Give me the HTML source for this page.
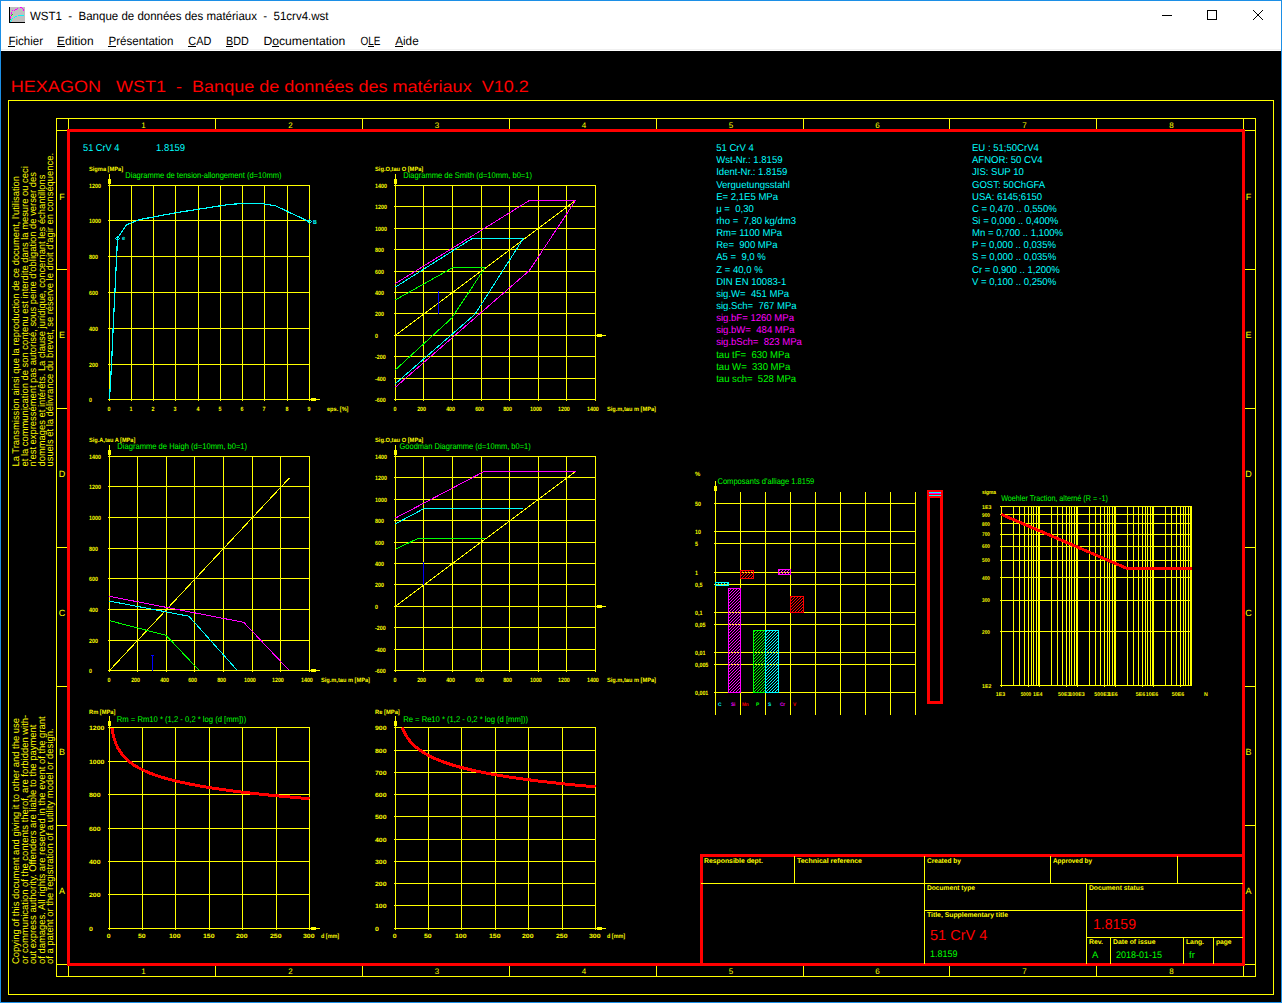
<!DOCTYPE html>
<html><head><meta charset="utf-8"><style>
html,body{margin:0;padding:0;background:#000;}
body{width:1282px;height:1003px;overflow:hidden;}
svg{display:block;text-rendering:geometricPrecision;font-family:"Liberation Sans",sans-serif;}
</style></head><body>
<svg width="1282" height="1003" viewBox="0 0 1282 1003" shape-rendering="crispEdges">
<defs><pattern id="h00ffff" patternUnits="userSpaceOnUse" width="3" height="3"><path d="M0 3L3 0M-1 1L1 -1M2 4L4 2" stroke="#00ffff" stroke-width="1" shape-rendering="crispEdges"/></pattern><pattern id="hff00ff" patternUnits="userSpaceOnUse" width="3" height="3"><path d="M0 3L3 0M-1 1L1 -1M2 4L4 2" stroke="#ff00ff" stroke-width="1" shape-rendering="crispEdges"/></pattern><pattern id="hff0000" patternUnits="userSpaceOnUse" width="3" height="3"><path d="M0 3L3 0M-1 1L1 -1M2 4L4 2" stroke="#ff0000" stroke-width="1" shape-rendering="crispEdges"/></pattern><pattern id="h00ff00" patternUnits="userSpaceOnUse" width="3" height="3"><path d="M0 3L3 0M-1 1L1 -1M2 4L4 2" stroke="#00ff00" stroke-width="1" shape-rendering="crispEdges"/></pattern></defs>
<rect x="0" y="0" width="1282" height="51" fill="#ffffff"/>
<rect x="1" y="49" width="1280" height="1" fill="#f0f0f0"/>
<rect x="1" y="51" width="1280" height="951" fill="#000000"/>
<rect x="0" y="0" width="1282" height="1" fill="#1c8fe6"/>
<rect x="0" y="0" width="1" height="1003" fill="#1c8fe6"/>
<rect x="1281" y="0" width="1" height="1003" fill="#1c8fe6"/>
<rect x="0" y="1002" width="1282" height="1" fill="#1c8fe6"/>
<rect x="10" y="7" width="15" height="15" fill="#c0c0c0"/>
<rect x="9" y="7" width="1" height="16" fill="#000"/><rect x="9" y="22" width="16" height="1" fill="#000"/>
<rect x="12" y="10" width="1" height="1" fill="#ff00ff"/>
<rect x="14" y="10" width="1" height="1" fill="#ff00ff"/>
<rect x="15" y="9" width="1" height="1" fill="#ff00ff"/>
<rect x="16" y="9" width="1" height="1" fill="#ff00ff"/>
<rect x="17" y="8" width="1" height="1" fill="#ff00ff"/>
<rect x="20" y="7" width="1" height="1" fill="#ff00ff"/>
<rect x="21" y="7" width="1" height="1" fill="#ff00ff"/>
<rect x="22" y="8" width="1" height="1" fill="#ff00ff"/>
<rect x="23" y="9" width="1" height="1" fill="#ff00ff"/>
<rect x="23" y="10" width="1" height="1" fill="#ff00ff"/>
<rect x="11" y="12" width="1" height="1" fill="#ff00ff"/>
<rect x="11" y="13" width="1" height="1" fill="#ff00ff"/>
<rect x="11" y="14" width="1" height="1" fill="#ff00ff"/>
<rect x="10" y="16" width="1" height="1" fill="#ff00ff"/>
<rect x="10" y="17" width="1" height="1" fill="#ff00ff"/>
<rect x="10" y="18" width="1" height="1" fill="#ff00ff"/>
<rect x="12" y="14" width="1" height="1" fill="#00ff00"/>
<rect x="11" y="15" width="1" height="1" fill="#00ff00"/>
<rect x="10" y="19" width="1" height="1" fill="#00ff00"/>
<rect x="10" y="21" width="1" height="1" fill="#00ffff"/>
<rect x="11" y="19" width="1" height="1" fill="#00ffff"/>
<rect x="11" y="20" width="1" height="1" fill="#00ffff"/>
<rect x="12" y="18" width="1" height="1" fill="#00ffff"/>
<rect x="14" y="17" width="1" height="1" fill="#00ffff"/>
<rect x="15" y="16" width="1" height="1" fill="#00ffff"/>
<rect x="16" y="16" width="1" height="1" fill="#00ffff"/>
<rect x="18" y="15" width="1" height="1" fill="#00ffff"/>
<rect x="19" y="15" width="1" height="1" fill="#00ffff"/>
<rect x="20" y="15" width="1" height="1" fill="#00ffff"/>
<rect x="21" y="15" width="1" height="1" fill="#00ffff"/>
<rect x="22" y="15" width="1" height="1" fill="#00ffff"/>
<rect x="23" y="15" width="1" height="1" fill="#00ffff"/>
<text x="30" y="20" font-size="12" fill="#000" textLength="298.5" lengthAdjust="spacingAndGlyphs" xml:space="preserve">WST1  -  Banque de données des matériaux  -  51crv4.wst</text>
<path d="M1162 15.5H1172" stroke="#000" stroke-width="1"/>
<rect x="1207.5" y="10.5" width="9" height="9" fill="none" stroke="#000" stroke-width="1"/>
<path d="M1253 10L1263 20M1263 10L1253 20" stroke="#000" stroke-width="1"/>
<text x="8.5" y="45" font-size="12" fill="#000" textLength="34.5" lengthAdjust="spacingAndGlyphs">Fichier</text>
<rect x="8" y="46" width="7" height="1" fill="#000"/>
<text x="57.1" y="45" font-size="12" fill="#000" textLength="36.5" lengthAdjust="spacingAndGlyphs">Edition</text>
<rect x="57" y="46" width="8" height="1" fill="#000"/>
<text x="108.5" y="45" font-size="12" fill="#000" textLength="65" lengthAdjust="spacingAndGlyphs">Présentation</text>
<rect x="108" y="46" width="8" height="1" fill="#000"/>
<text x="188.3" y="45" font-size="12" fill="#000" textLength="23" lengthAdjust="spacingAndGlyphs">CAD</text>
<rect x="188" y="46" width="8" height="1" fill="#000"/>
<text x="226" y="45" font-size="12" fill="#000" textLength="22.7" lengthAdjust="spacingAndGlyphs">BDD</text>
<rect x="226" y="46" width="7" height="1" fill="#000"/>
<text x="263.4" y="45" font-size="12" fill="#000" textLength="82" lengthAdjust="spacingAndGlyphs">Documentation</text>
<rect x="272" y="46" width="7" height="1" fill="#000"/>
<text x="360.5" y="45" font-size="12" fill="#000" textLength="20" lengthAdjust="spacingAndGlyphs">OLE</text>
<rect x="368" y="46" width="6" height="1" fill="#000"/>
<text x="395.2" y="45" font-size="12" fill="#000" textLength="23.5" lengthAdjust="spacingAndGlyphs">Aide</text>
<rect x="395" y="46" width="8" height="1" fill="#000"/>
<text x="10.8" y="92" font-size="16.5" fill="#ff0000" textLength="518" lengthAdjust="spacingAndGlyphs" xml:space="preserve">HEXAGON   WST1  -  Banque de données des matériaux  V10.2</text>
<rect x="8.5" y="100.5" width="1265" height="894" fill="none" stroke="#ff0" stroke-width="1"/>
<rect x="56.5" y="118.5" width="1199" height="858" fill="none" stroke="#ff0" stroke-width="1"/>
<path d="M56 130.5H69" stroke="#ffff00" stroke-width="1"/>
<path d="M68.5 118V131" stroke="#ffff00" stroke-width="1"/>
<path d="M1243 130.5H1256" stroke="#ffff00" stroke-width="1"/>
<path d="M1243.5 118V131" stroke="#ffff00" stroke-width="1"/>
<path d="M56 964.5H69" stroke="#ffff00" stroke-width="1"/>
<path d="M68.5 964V977" stroke="#ffff00" stroke-width="1"/>
<path d="M1243 964.5H1256" stroke="#ffff00" stroke-width="1"/>
<path d="M1243.5 964V977" stroke="#ffff00" stroke-width="1"/>
<path d="M215.5 118V132" stroke="#ffff00" stroke-width="1"/>
<path d="M215.5 963V977" stroke="#ffff00" stroke-width="1"/>
<path d="M362.5 118V132" stroke="#ffff00" stroke-width="1"/>
<path d="M362.5 963V977" stroke="#ffff00" stroke-width="1"/>
<path d="M509.5 118V132" stroke="#ffff00" stroke-width="1"/>
<path d="M509.5 963V977" stroke="#ffff00" stroke-width="1"/>
<path d="M656.5 118V132" stroke="#ffff00" stroke-width="1"/>
<path d="M656.5 963V977" stroke="#ffff00" stroke-width="1"/>
<path d="M803.5 118V132" stroke="#ffff00" stroke-width="1"/>
<path d="M803.5 963V977" stroke="#ffff00" stroke-width="1"/>
<path d="M949.5 118V132" stroke="#ffff00" stroke-width="1"/>
<path d="M949.5 963V977" stroke="#ffff00" stroke-width="1"/>
<path d="M1096.5 118V132" stroke="#ffff00" stroke-width="1"/>
<path d="M1096.5 963V977" stroke="#ffff00" stroke-width="1"/>
<text x="143.5" y="128" font-size="8" fill="#ffff00" text-anchor="middle">1</text>
<text x="143.5" y="974" font-size="8" fill="#ffff00" text-anchor="middle">1</text>
<text x="290.5" y="128" font-size="8" fill="#ffff00" text-anchor="middle">2</text>
<text x="290.5" y="974" font-size="8" fill="#ffff00" text-anchor="middle">2</text>
<text x="437.0" y="128" font-size="8" fill="#ffff00" text-anchor="middle">3</text>
<text x="437.0" y="974" font-size="8" fill="#ffff00" text-anchor="middle">3</text>
<text x="584.0" y="128" font-size="8" fill="#ffff00" text-anchor="middle">4</text>
<text x="584.0" y="974" font-size="8" fill="#ffff00" text-anchor="middle">4</text>
<text x="731.0" y="128" font-size="8" fill="#ffff00" text-anchor="middle">5</text>
<text x="731.0" y="974" font-size="8" fill="#ffff00" text-anchor="middle">5</text>
<text x="877.5" y="128" font-size="8" fill="#ffff00" text-anchor="middle">6</text>
<text x="877.5" y="974" font-size="8" fill="#ffff00" text-anchor="middle">6</text>
<text x="1024.5" y="128" font-size="8" fill="#ffff00" text-anchor="middle">7</text>
<text x="1024.5" y="974" font-size="8" fill="#ffff00" text-anchor="middle">7</text>
<text x="1171.5" y="128" font-size="8" fill="#ffff00" text-anchor="middle">8</text>
<text x="1171.5" y="974" font-size="8" fill="#ffff00" text-anchor="middle">8</text>
<path d="M56 269.5H69" stroke="#ffff00" stroke-width="1"/>
<path d="M1243 269.5H1256" stroke="#ffff00" stroke-width="1"/>
<path d="M56 408.5H69" stroke="#ffff00" stroke-width="1"/>
<path d="M1243 408.5H1256" stroke="#ffff00" stroke-width="1"/>
<path d="M56 547.5H69" stroke="#ffff00" stroke-width="1"/>
<path d="M1243 547.5H1256" stroke="#ffff00" stroke-width="1"/>
<path d="M56 686.5H69" stroke="#ffff00" stroke-width="1"/>
<path d="M1243 686.5H1256" stroke="#ffff00" stroke-width="1"/>
<path d="M56 825.5H69" stroke="#ffff00" stroke-width="1"/>
<path d="M1243 825.5H1256" stroke="#ffff00" stroke-width="1"/>
<text x="62" y="199.5" font-size="9" fill="#ffff00" text-anchor="middle">F</text>
<text x="1248.5" y="199.5" font-size="9" fill="#ffff00" text-anchor="middle">F</text>
<text x="62" y="338.41999999999996" font-size="9" fill="#ffff00" text-anchor="middle">E</text>
<text x="1248.5" y="338.41999999999996" font-size="9" fill="#ffff00" text-anchor="middle">E</text>
<text x="62" y="477.34" font-size="9" fill="#ffff00" text-anchor="middle">D</text>
<text x="1248.5" y="477.34" font-size="9" fill="#ffff00" text-anchor="middle">D</text>
<text x="62" y="616.26" font-size="9" fill="#ffff00" text-anchor="middle">C</text>
<text x="1248.5" y="616.26" font-size="9" fill="#ffff00" text-anchor="middle">C</text>
<text x="62" y="755.18" font-size="9" fill="#ffff00" text-anchor="middle">B</text>
<text x="1248.5" y="755.18" font-size="9" fill="#ffff00" text-anchor="middle">B</text>
<text x="62" y="894.0999999999999" font-size="9" fill="#ffff00" text-anchor="middle">A</text>
<text x="1248.5" y="894.0999999999999" font-size="9" fill="#ffff00" text-anchor="middle">A</text>
<rect x="68.5" y="130.5" width="1175" height="834" fill="none" stroke="#ff0000" stroke-width="3"/>
<g transform="translate(0,466.5) rotate(-90)">
<text x="0" y="19.4" font-size="9.8" fill="#ffff00" textLength="290.56" lengthAdjust="spacingAndGlyphs">La Transmission ainsi que la reproduction de ce document, l'utilisation</text>
<text x="0" y="27.799999999999997" font-size="9.8" fill="#ffff00" textLength="300.24" lengthAdjust="spacingAndGlyphs">et la communication de son contenu est interdite dans la mesure ou ceci</text>
<text x="0" y="36.2" font-size="9.8" fill="#ffff00" textLength="294.44" lengthAdjust="spacingAndGlyphs">n'est expressément pas autorisé, sous peine d'obligation de verser des</text>
<text x="0" y="44.6" font-size="9.8" fill="#ffff00" textLength="291.9" lengthAdjust="spacingAndGlyphs">dommages et intérêts. La clause juridique, concernant les échantillons</text>
<text x="0" y="53.0" font-size="9.8" fill="#ffff00" textLength="313.5" lengthAdjust="spacingAndGlyphs">usuels et la délivrance du brevet, se réserve le droit d'agir en conséquence.</text>
</g>
<g transform="translate(0,964) rotate(-90)">
<text x="0" y="19.4" font-size="9.8" fill="#ffff00" textLength="246.08" lengthAdjust="spacingAndGlyphs">Copying of this document and giving it to other and the use</text>
<text x="0" y="27.799999999999997" font-size="9.8" fill="#ffff00" textLength="249.2" lengthAdjust="spacingAndGlyphs">or communication of the contents therof, are forbidden with-</text>
<text x="0" y="36.2" font-size="9.8" fill="#ffff00" textLength="239.42" lengthAdjust="spacingAndGlyphs">out express authority. Offenders are liable to the payment</text>
<text x="0" y="44.6" font-size="9.8" fill="#ffff00" textLength="247.64" lengthAdjust="spacingAndGlyphs">of damages. All rights are reserved in the event of the grant</text>
<text x="0" y="53.0" font-size="9.8" fill="#ffff00" textLength="235.57" lengthAdjust="spacingAndGlyphs">of a patent or the registration of a utility model or design.</text>
</g>
<path d="M109.5 185V401" stroke="#ffff00" stroke-width="1"/>
<path d="M131.5 185V401" stroke="#ffff00" stroke-width="1"/>
<path d="M153.5 185V401" stroke="#ffff00" stroke-width="1"/>
<path d="M175.5 185V401" stroke="#ffff00" stroke-width="1"/>
<path d="M198.5 185V401" stroke="#ffff00" stroke-width="1"/>
<path d="M220.5 185V401" stroke="#ffff00" stroke-width="1"/>
<path d="M242.5 185V401" stroke="#ffff00" stroke-width="1"/>
<path d="M264.5 185V401" stroke="#ffff00" stroke-width="1"/>
<path d="M287.5 185V401" stroke="#ffff00" stroke-width="1"/>
<path d="M309.5 185V401" stroke="#ffff00" stroke-width="1"/>
<path d="M108 185.5H310" stroke="#ffff00" stroke-width="1"/>
<path d="M108 220.5H310" stroke="#ffff00" stroke-width="1"/>
<path d="M108 256.5H310" stroke="#ffff00" stroke-width="1"/>
<path d="M108 292.5H310" stroke="#ffff00" stroke-width="1"/>
<path d="M108 328.5H310" stroke="#ffff00" stroke-width="1"/>
<path d="M108 364.5H310" stroke="#ffff00" stroke-width="1"/>
<path d="M108 399.5H310" stroke="#ffff00" stroke-width="1"/>
<path d="M109.5 174V186" stroke="#ffff00" stroke-width="1"/>
<rect x="108" y="179" width="3" height="5" fill="#ffff00"/>
<path d="M309 399.5H320" stroke="#ffff00" stroke-width="1"/>
<rect x="311" y="398" width="5" height="3" fill="#ffff00"/>
<text x="89" y="187.5" font-size="6.2" fill="#ffff00" textLength="11.86" lengthAdjust="spacingAndGlyphs" font-weight="bold">1200</text>
<text x="89" y="222.5" font-size="6.2" fill="#ffff00" textLength="11.86" lengthAdjust="spacingAndGlyphs" font-weight="bold">1000</text>
<text x="89" y="258.5" font-size="6.2" fill="#ffff00" textLength="8.9" lengthAdjust="spacingAndGlyphs" font-weight="bold">800</text>
<text x="89" y="294.5" font-size="6.2" fill="#ffff00" textLength="8.9" lengthAdjust="spacingAndGlyphs" font-weight="bold">600</text>
<text x="89" y="330.5" font-size="6.2" fill="#ffff00" textLength="8.9" lengthAdjust="spacingAndGlyphs" font-weight="bold">400</text>
<text x="89" y="366.5" font-size="6.2" fill="#ffff00" textLength="8.9" lengthAdjust="spacingAndGlyphs" font-weight="bold">200</text>
<text x="89" y="401.5" font-size="6.2" fill="#ffff00" textLength="2.97" lengthAdjust="spacingAndGlyphs" font-weight="bold">0</text>
<text x="109.0" y="410.5" font-size="6.2" fill="#ffff00" text-anchor="middle" textLength="2.97" lengthAdjust="spacingAndGlyphs" font-weight="bold">0</text>
<text x="131.0" y="410.5" font-size="6.2" fill="#ffff00" text-anchor="middle" textLength="2.97" lengthAdjust="spacingAndGlyphs" font-weight="bold">1</text>
<text x="153.0" y="410.5" font-size="6.2" fill="#ffff00" text-anchor="middle" textLength="2.97" lengthAdjust="spacingAndGlyphs" font-weight="bold">2</text>
<text x="175.0" y="410.5" font-size="6.2" fill="#ffff00" text-anchor="middle" textLength="2.97" lengthAdjust="spacingAndGlyphs" font-weight="bold">3</text>
<text x="198.0" y="410.5" font-size="6.2" fill="#ffff00" text-anchor="middle" textLength="2.97" lengthAdjust="spacingAndGlyphs" font-weight="bold">4</text>
<text x="220.0" y="410.5" font-size="6.2" fill="#ffff00" text-anchor="middle" textLength="2.97" lengthAdjust="spacingAndGlyphs" font-weight="bold">5</text>
<text x="242.0" y="410.5" font-size="6.2" fill="#ffff00" text-anchor="middle" textLength="2.97" lengthAdjust="spacingAndGlyphs" font-weight="bold">6</text>
<text x="264.0" y="410.5" font-size="6.2" fill="#ffff00" text-anchor="middle" textLength="2.97" lengthAdjust="spacingAndGlyphs" font-weight="bold">7</text>
<text x="287.0" y="410.5" font-size="6.2" fill="#ffff00" text-anchor="middle" textLength="2.97" lengthAdjust="spacingAndGlyphs" font-weight="bold">8</text>
<text x="309.0" y="410.5" font-size="6.2" fill="#ffff00" text-anchor="middle" textLength="2.97" lengthAdjust="spacingAndGlyphs" font-weight="bold">9</text>
<text x="89" y="171" font-size="6.2" fill="#ffff00" textLength="34.07" lengthAdjust="spacingAndGlyphs" font-weight="bold">Sigma [MPa]</text>
<text x="327" y="410.5" font-size="6.2" fill="#ffff00" textLength="21.5" lengthAdjust="spacingAndGlyphs" font-weight="bold">eps. [%]</text>
<text x="125.3" y="178.3" font-size="8.4" fill="#00ff00" textLength="156.2" lengthAdjust="spacingAndGlyphs">Diagramme de tension-allongement (d=10mm)</text>
<text x="83" y="151" font-size="10" fill="#00ffff" textLength="36.5" lengthAdjust="spacingAndGlyphs">51 CrV 4</text>
<text x="156" y="151" font-size="10" fill="#00ffff" textLength="29.05" lengthAdjust="spacingAndGlyphs">1.8159</text>
<path d="M109.50 399.50 L111.50 365.00 L113.20 326.00 L115.30 284.00 L117.50 238.50 L121.00 233.00 L126.30 225.10 L131.00 223.00 L139.50 219.60 L174.50 213.00 L227.20 204.70 L244.70 203.20 L262.20 203.60 L275.40 205.80 L309.50 221.80" fill="none" stroke="#00ffff" stroke-width="1.2" stroke-linejoin="round"/>
<circle cx="117.5" cy="238.5" r="1.6" fill="none" stroke="#00ffff" stroke-width="1"/>
<circle cx="309.5" cy="221.5" r="1.6" fill="none" stroke="#00ffff" stroke-width="1"/>
<text x="122" y="240" font-size="6" fill="#00ffff" textLength="3.2" lengthAdjust="spacingAndGlyphs" font-weight="bold">e</text>
<text x="313" y="223.5" font-size="6" fill="#00ffff" textLength="3.84" lengthAdjust="spacingAndGlyphs" font-weight="bold">B</text>
<path d="M395.5 185V401" stroke="#ffff00" stroke-width="1"/>
<path d="M423.5 185V401" stroke="#ffff00" stroke-width="1"/>
<path d="M452.5 185V401" stroke="#ffff00" stroke-width="1"/>
<path d="M481.5 185V401" stroke="#ffff00" stroke-width="1"/>
<path d="M509.5 185V401" stroke="#ffff00" stroke-width="1"/>
<path d="M538.5 185V401" stroke="#ffff00" stroke-width="1"/>
<path d="M566.5 185V401" stroke="#ffff00" stroke-width="1"/>
<path d="M595.5 185V401" stroke="#ffff00" stroke-width="1"/>
<path d="M394 185.5H596" stroke="#ffff00" stroke-width="1"/>
<path d="M394 206.5H596" stroke="#ffff00" stroke-width="1"/>
<path d="M394 228.5H596" stroke="#ffff00" stroke-width="1"/>
<path d="M394 249.5H596" stroke="#ffff00" stroke-width="1"/>
<path d="M394 271.5H596" stroke="#ffff00" stroke-width="1"/>
<path d="M394 292.5H596" stroke="#ffff00" stroke-width="1"/>
<path d="M394 313.5H596" stroke="#ffff00" stroke-width="1"/>
<path d="M394 335.5H596" stroke="#ffff00" stroke-width="1"/>
<path d="M394 356.5H596" stroke="#ffff00" stroke-width="1"/>
<path d="M394 378.5H596" stroke="#ffff00" stroke-width="1"/>
<path d="M394 399.5H596" stroke="#ffff00" stroke-width="1"/>
<path d="M395.5 174V186" stroke="#ffff00" stroke-width="1"/>
<rect x="394" y="179" width="3" height="5" fill="#ffff00"/>
<text x="375" y="187.5" font-size="6.2" fill="#ffff00" textLength="11.86" lengthAdjust="spacingAndGlyphs" font-weight="bold">1400</text>
<text x="375" y="208.5" font-size="6.2" fill="#ffff00" textLength="11.86" lengthAdjust="spacingAndGlyphs" font-weight="bold">1200</text>
<text x="375" y="230.5" font-size="6.2" fill="#ffff00" textLength="11.86" lengthAdjust="spacingAndGlyphs" font-weight="bold">1000</text>
<text x="375" y="251.5" font-size="6.2" fill="#ffff00" textLength="8.9" lengthAdjust="spacingAndGlyphs" font-weight="bold">800</text>
<text x="375" y="273.5" font-size="6.2" fill="#ffff00" textLength="8.9" lengthAdjust="spacingAndGlyphs" font-weight="bold">600</text>
<text x="375" y="294.5" font-size="6.2" fill="#ffff00" textLength="8.9" lengthAdjust="spacingAndGlyphs" font-weight="bold">400</text>
<text x="375" y="315.5" font-size="6.2" fill="#ffff00" textLength="8.9" lengthAdjust="spacingAndGlyphs" font-weight="bold">200</text>
<text x="375" y="337.5" font-size="6.2" fill="#ffff00" textLength="2.97" lengthAdjust="spacingAndGlyphs" font-weight="bold">0</text>
<text x="375" y="358.5" font-size="6.2" fill="#ffff00" textLength="10.67" lengthAdjust="spacingAndGlyphs" font-weight="bold">-200</text>
<text x="375" y="380.5" font-size="6.2" fill="#ffff00" textLength="10.67" lengthAdjust="spacingAndGlyphs" font-weight="bold">-400</text>
<text x="375" y="401.5" font-size="6.2" fill="#ffff00" textLength="10.67" lengthAdjust="spacingAndGlyphs" font-weight="bold">-600</text>
<text x="395.0" y="410.5" font-size="6.2" fill="#ffff00" text-anchor="middle" textLength="2.97" lengthAdjust="spacingAndGlyphs" font-weight="bold">0</text>
<text x="421.6" y="410.5" font-size="6.2" fill="#ffff00" text-anchor="middle" textLength="8.9" lengthAdjust="spacingAndGlyphs" font-weight="bold">200</text>
<text x="450.6" y="410.5" font-size="6.2" fill="#ffff00" text-anchor="middle" textLength="8.9" lengthAdjust="spacingAndGlyphs" font-weight="bold">400</text>
<text x="479.6" y="410.5" font-size="6.2" fill="#ffff00" text-anchor="middle" textLength="8.9" lengthAdjust="spacingAndGlyphs" font-weight="bold">600</text>
<text x="507.6" y="410.5" font-size="6.2" fill="#ffff00" text-anchor="middle" textLength="8.9" lengthAdjust="spacingAndGlyphs" font-weight="bold">800</text>
<text x="535.9" y="410.5" font-size="6.2" fill="#ffff00" text-anchor="middle" textLength="11.86" lengthAdjust="spacingAndGlyphs" font-weight="bold">1000</text>
<text x="563.9" y="410.5" font-size="6.2" fill="#ffff00" text-anchor="middle" textLength="11.86" lengthAdjust="spacingAndGlyphs" font-weight="bold">1200</text>
<text x="592.9" y="410.5" font-size="6.2" fill="#ffff00" text-anchor="middle" textLength="11.86" lengthAdjust="spacingAndGlyphs" font-weight="bold">1400</text>
<text x="375" y="171" font-size="6.2" fill="#ffff00" textLength="48.29" lengthAdjust="spacingAndGlyphs" font-weight="bold">Sig.O,tau O [MPa]</text>
<text x="607" y="410.5" font-size="6.2" fill="#ffff00" textLength="48.95" lengthAdjust="spacingAndGlyphs" font-weight="bold">Sig.m,tau m [MPa]</text>
<text x="403.2" y="178.3" font-size="8.4" fill="#00ff00" textLength="128.8" lengthAdjust="spacingAndGlyphs">Diagramme de Smith (d=10mm, b0=1)</text>
<path d="M395.50 335.30 L575.50 200.48" fill="none" stroke="#ffff00" stroke-width="1" stroke-linejoin="round"/>
<path d="M395.50 283.51 L529.36 200.48 L575.50 200.48 L529.36 270.56 L395.50 387.09" fill="none" stroke="#ff00ff" stroke-width="1" stroke-linejoin="round"/>
<path d="M395.50 287.04 L472.93 238.04 L523.64 238.04 L474.93 314.33 L395.50 383.56" fill="none" stroke="#00ffff" stroke-width="1" stroke-linejoin="round"/>
<path d="M395.50 299.88 L452.50 267.78 L484.93 267.78 L451.93 317.86 L395.50 369.75" fill="none" stroke="#00ff00" stroke-width="1" stroke-linejoin="round"/>
<path d="M438.5 291V314" stroke="#0000ff" stroke-width="1.3"/>
<path d="M595 335.5H606" stroke="#ffff00" stroke-width="1"/>
<rect x="597" y="334" width="5" height="3" fill="#ffff00"/>
<path d="M109.5 456V672" stroke="#ffff00" stroke-width="1"/>
<path d="M137.5 456V672" stroke="#ffff00" stroke-width="1"/>
<path d="M166.5 456V672" stroke="#ffff00" stroke-width="1"/>
<path d="M194.5 456V672" stroke="#ffff00" stroke-width="1"/>
<path d="M223.5 456V672" stroke="#ffff00" stroke-width="1"/>
<path d="M252.5 456V672" stroke="#ffff00" stroke-width="1"/>
<path d="M280.5 456V672" stroke="#ffff00" stroke-width="1"/>
<path d="M309.5 456V672" stroke="#ffff00" stroke-width="1"/>
<path d="M108 456.5H310" stroke="#ffff00" stroke-width="1"/>
<path d="M108 486.5H310" stroke="#ffff00" stroke-width="1"/>
<path d="M108 517.5H310" stroke="#ffff00" stroke-width="1"/>
<path d="M108 548.5H310" stroke="#ffff00" stroke-width="1"/>
<path d="M108 578.5H310" stroke="#ffff00" stroke-width="1"/>
<path d="M108 609.5H310" stroke="#ffff00" stroke-width="1"/>
<path d="M108 640.5H310" stroke="#ffff00" stroke-width="1"/>
<path d="M108 670.5H310" stroke="#ffff00" stroke-width="1"/>
<path d="M109.5 445V457" stroke="#ffff00" stroke-width="1"/>
<rect x="108" y="450" width="3" height="5" fill="#ffff00"/>
<path d="M309 670.5H320" stroke="#ffff00" stroke-width="1"/>
<rect x="311" y="669" width="5" height="3" fill="#ffff00"/>
<text x="89" y="458.5" font-size="6.2" fill="#ffff00" textLength="11.86" lengthAdjust="spacingAndGlyphs" font-weight="bold">1400</text>
<text x="89" y="488.5" font-size="6.2" fill="#ffff00" textLength="11.86" lengthAdjust="spacingAndGlyphs" font-weight="bold">1200</text>
<text x="89" y="519.5" font-size="6.2" fill="#ffff00" textLength="11.86" lengthAdjust="spacingAndGlyphs" font-weight="bold">1000</text>
<text x="89" y="550.5" font-size="6.2" fill="#ffff00" textLength="8.9" lengthAdjust="spacingAndGlyphs" font-weight="bold">800</text>
<text x="89" y="580.5" font-size="6.2" fill="#ffff00" textLength="8.9" lengthAdjust="spacingAndGlyphs" font-weight="bold">600</text>
<text x="89" y="611.5" font-size="6.2" fill="#ffff00" textLength="8.9" lengthAdjust="spacingAndGlyphs" font-weight="bold">400</text>
<text x="89" y="642.5" font-size="6.2" fill="#ffff00" textLength="8.9" lengthAdjust="spacingAndGlyphs" font-weight="bold">200</text>
<text x="89" y="672.5" font-size="6.2" fill="#ffff00" textLength="2.97" lengthAdjust="spacingAndGlyphs" font-weight="bold">0</text>
<text x="109.0" y="682" font-size="6.2" fill="#ffff00" text-anchor="middle" textLength="2.97" lengthAdjust="spacingAndGlyphs" font-weight="bold">0</text>
<text x="135.6" y="682" font-size="6.2" fill="#ffff00" text-anchor="middle" textLength="8.9" lengthAdjust="spacingAndGlyphs" font-weight="bold">200</text>
<text x="164.6" y="682" font-size="6.2" fill="#ffff00" text-anchor="middle" textLength="8.9" lengthAdjust="spacingAndGlyphs" font-weight="bold">400</text>
<text x="192.6" y="682" font-size="6.2" fill="#ffff00" text-anchor="middle" textLength="8.9" lengthAdjust="spacingAndGlyphs" font-weight="bold">600</text>
<text x="221.6" y="682" font-size="6.2" fill="#ffff00" text-anchor="middle" textLength="8.9" lengthAdjust="spacingAndGlyphs" font-weight="bold">800</text>
<text x="249.9" y="682" font-size="6.2" fill="#ffff00" text-anchor="middle" textLength="11.86" lengthAdjust="spacingAndGlyphs" font-weight="bold">1000</text>
<text x="277.9" y="682" font-size="6.2" fill="#ffff00" text-anchor="middle" textLength="11.86" lengthAdjust="spacingAndGlyphs" font-weight="bold">1200</text>
<text x="306.9" y="682" font-size="6.2" fill="#ffff00" text-anchor="middle" textLength="11.86" lengthAdjust="spacingAndGlyphs" font-weight="bold">1400</text>
<text x="89" y="441.5" font-size="6.2" fill="#ffff00" textLength="46.32" lengthAdjust="spacingAndGlyphs" font-weight="bold">Sig.A,tau A [MPa]</text>
<text x="321" y="682" font-size="6.2" fill="#ffff00" textLength="48.95" lengthAdjust="spacingAndGlyphs" font-weight="bold">Sig.m,tau m [MPa]</text>
<text x="117.3" y="449.3" font-size="8.4" fill="#00ff00" textLength="129.8" lengthAdjust="spacingAndGlyphs">Diagramme de Haigh (d=10mm, b0=1)</text>
<path d="M109.50 670.50 L289.21 478.21" fill="none" stroke="#ffff00" stroke-width="1" stroke-linejoin="round"/>
<path d="M109.50 596.36 L243.79 622.35 L289.21 670.50" fill="none" stroke="#ff00ff" stroke-width="1" stroke-linejoin="round"/>
<path d="M109.50 601.10 L188.93 616.24 L237.36 670.50" fill="none" stroke="#00ffff" stroke-width="1" stroke-linejoin="round"/>
<path d="M109.50 620.67 L166.07 635.34 L199.21 670.50" fill="none" stroke="#00ff00" stroke-width="1" stroke-linejoin="round"/>
<path d="M152.5 654.5V671M151 655H154" stroke="#0000ff" stroke-width="1"/>
<path d="M395.5 456V672" stroke="#ffff00" stroke-width="1"/>
<path d="M423.5 456V672" stroke="#ffff00" stroke-width="1"/>
<path d="M452.5 456V672" stroke="#ffff00" stroke-width="1"/>
<path d="M481.5 456V672" stroke="#ffff00" stroke-width="1"/>
<path d="M509.5 456V672" stroke="#ffff00" stroke-width="1"/>
<path d="M538.5 456V672" stroke="#ffff00" stroke-width="1"/>
<path d="M566.5 456V672" stroke="#ffff00" stroke-width="1"/>
<path d="M595.5 456V672" stroke="#ffff00" stroke-width="1"/>
<path d="M394 456.5H596" stroke="#ffff00" stroke-width="1"/>
<path d="M394 477.5H596" stroke="#ffff00" stroke-width="1"/>
<path d="M394 499.5H596" stroke="#ffff00" stroke-width="1"/>
<path d="M394 520.5H596" stroke="#ffff00" stroke-width="1"/>
<path d="M394 542.5H596" stroke="#ffff00" stroke-width="1"/>
<path d="M394 563.5H596" stroke="#ffff00" stroke-width="1"/>
<path d="M394 584.5H596" stroke="#ffff00" stroke-width="1"/>
<path d="M394 606.5H596" stroke="#ffff00" stroke-width="1"/>
<path d="M394 627.5H596" stroke="#ffff00" stroke-width="1"/>
<path d="M394 649.5H596" stroke="#ffff00" stroke-width="1"/>
<path d="M394 670.5H596" stroke="#ffff00" stroke-width="1"/>
<path d="M395.5 445V457" stroke="#ffff00" stroke-width="1"/>
<rect x="394" y="450" width="3" height="5" fill="#ffff00"/>
<path d="M595 606.5H606" stroke="#ffff00" stroke-width="1"/>
<rect x="597" y="605" width="5" height="3" fill="#ffff00"/>
<text x="375" y="458.5" font-size="6.2" fill="#ffff00" textLength="11.86" lengthAdjust="spacingAndGlyphs" font-weight="bold">1400</text>
<text x="375" y="479.5" font-size="6.2" fill="#ffff00" textLength="11.86" lengthAdjust="spacingAndGlyphs" font-weight="bold">1200</text>
<text x="375" y="501.5" font-size="6.2" fill="#ffff00" textLength="11.86" lengthAdjust="spacingAndGlyphs" font-weight="bold">1000</text>
<text x="375" y="522.5" font-size="6.2" fill="#ffff00" textLength="8.9" lengthAdjust="spacingAndGlyphs" font-weight="bold">800</text>
<text x="375" y="544.5" font-size="6.2" fill="#ffff00" textLength="8.9" lengthAdjust="spacingAndGlyphs" font-weight="bold">600</text>
<text x="375" y="565.5" font-size="6.2" fill="#ffff00" textLength="8.9" lengthAdjust="spacingAndGlyphs" font-weight="bold">400</text>
<text x="375" y="586.5" font-size="6.2" fill="#ffff00" textLength="8.9" lengthAdjust="spacingAndGlyphs" font-weight="bold">200</text>
<text x="375" y="608.5" font-size="6.2" fill="#ffff00" textLength="2.97" lengthAdjust="spacingAndGlyphs" font-weight="bold">0</text>
<text x="375" y="629.5" font-size="6.2" fill="#ffff00" textLength="10.67" lengthAdjust="spacingAndGlyphs" font-weight="bold">-200</text>
<text x="375" y="651.5" font-size="6.2" fill="#ffff00" textLength="10.67" lengthAdjust="spacingAndGlyphs" font-weight="bold">-400</text>
<text x="375" y="672.5" font-size="6.2" fill="#ffff00" textLength="10.67" lengthAdjust="spacingAndGlyphs" font-weight="bold">-600</text>
<text x="395.0" y="682" font-size="6.2" fill="#ffff00" text-anchor="middle" textLength="2.97" lengthAdjust="spacingAndGlyphs" font-weight="bold">0</text>
<text x="421.6" y="682" font-size="6.2" fill="#ffff00" text-anchor="middle" textLength="8.9" lengthAdjust="spacingAndGlyphs" font-weight="bold">200</text>
<text x="450.6" y="682" font-size="6.2" fill="#ffff00" text-anchor="middle" textLength="8.9" lengthAdjust="spacingAndGlyphs" font-weight="bold">400</text>
<text x="479.6" y="682" font-size="6.2" fill="#ffff00" text-anchor="middle" textLength="8.9" lengthAdjust="spacingAndGlyphs" font-weight="bold">600</text>
<text x="507.6" y="682" font-size="6.2" fill="#ffff00" text-anchor="middle" textLength="8.9" lengthAdjust="spacingAndGlyphs" font-weight="bold">800</text>
<text x="535.9" y="682" font-size="6.2" fill="#ffff00" text-anchor="middle" textLength="11.86" lengthAdjust="spacingAndGlyphs" font-weight="bold">1000</text>
<text x="563.9" y="682" font-size="6.2" fill="#ffff00" text-anchor="middle" textLength="11.86" lengthAdjust="spacingAndGlyphs" font-weight="bold">1200</text>
<text x="592.9" y="682" font-size="6.2" fill="#ffff00" text-anchor="middle" textLength="11.86" lengthAdjust="spacingAndGlyphs" font-weight="bold">1400</text>
<text x="375" y="441.5" font-size="6.2" fill="#ffff00" textLength="48.29" lengthAdjust="spacingAndGlyphs" font-weight="bold">Sig.O,tau O [MPa]</text>
<text x="607" y="682" font-size="6.2" fill="#ffff00" textLength="48.95" lengthAdjust="spacingAndGlyphs" font-weight="bold">Sig.m,tau m [MPa]</text>
<text x="399.5" y="449.3" font-size="8.4" fill="#00ff00" textLength="131.2" lengthAdjust="spacingAndGlyphs">Goodman Diagramme (d=10mm, b0=1)</text>
<path d="M395.50 606.30 L575.64 471.37" fill="none" stroke="#ffff00" stroke-width="1" stroke-linejoin="round"/>
<path d="M395.50 518.02 L484.93 471.05 L575.64 471.05" fill="none" stroke="#ff00ff" stroke-width="1" stroke-linejoin="round"/>
<path d="M395.50 523.80 L423.50 508.82 L522.93 508.82" fill="none" stroke="#00ffff" stroke-width="1" stroke-linejoin="round"/>
<path d="M395.50 549.27 L418.79 538.03 L484.93 538.03" fill="none" stroke="#00ff00" stroke-width="1" stroke-linejoin="round"/>
<path d="M423.5 562V585" stroke="#0000ff" stroke-width="1.3"/>
<path d="M109.5 727V930" stroke="#ffff00" stroke-width="1"/>
<path d="M142.5 727V930" stroke="#ffff00" stroke-width="1"/>
<path d="M175.5 727V930" stroke="#ffff00" stroke-width="1"/>
<path d="M209.5 727V930" stroke="#ffff00" stroke-width="1"/>
<path d="M242.5 727V930" stroke="#ffff00" stroke-width="1"/>
<path d="M276.5 727V930" stroke="#ffff00" stroke-width="1"/>
<path d="M309.5 727V930" stroke="#ffff00" stroke-width="1"/>
<path d="M108 727.5H310" stroke="#ffff00" stroke-width="1"/>
<path d="M108 761.5H310" stroke="#ffff00" stroke-width="1"/>
<path d="M108 794.5H310" stroke="#ffff00" stroke-width="1"/>
<path d="M108 828.5H310" stroke="#ffff00" stroke-width="1"/>
<path d="M108 861.5H310" stroke="#ffff00" stroke-width="1"/>
<path d="M108 894.5H310" stroke="#ffff00" stroke-width="1"/>
<path d="M108 928.5H310" stroke="#ffff00" stroke-width="1"/>
<path d="M109.5 716V728" stroke="#ffff00" stroke-width="1"/>
<rect x="108" y="721" width="3" height="5" fill="#ffff00"/>
<path d="M309 928.5H320" stroke="#ffff00" stroke-width="1"/>
<rect x="311" y="927" width="5" height="3" fill="#ffff00"/>
<text x="89" y="729.5" font-size="6.2" fill="#ffff00" textLength="15.45" lengthAdjust="spacingAndGlyphs" font-weight="bold">1200</text>
<text x="89" y="763.5" font-size="6.2" fill="#ffff00" textLength="15.45" lengthAdjust="spacingAndGlyphs" font-weight="bold">1000</text>
<text x="89" y="796.5" font-size="6.2" fill="#ffff00" textLength="11.58" lengthAdjust="spacingAndGlyphs" font-weight="bold">800</text>
<text x="89" y="830.5" font-size="6.2" fill="#ffff00" textLength="11.58" lengthAdjust="spacingAndGlyphs" font-weight="bold">600</text>
<text x="89" y="863.5" font-size="6.2" fill="#ffff00" textLength="11.58" lengthAdjust="spacingAndGlyphs" font-weight="bold">400</text>
<text x="89" y="896.5" font-size="6.2" fill="#ffff00" textLength="11.58" lengthAdjust="spacingAndGlyphs" font-weight="bold">200</text>
<text x="89" y="930.5" font-size="6.2" fill="#ffff00" textLength="3.86" lengthAdjust="spacingAndGlyphs" font-weight="bold">0</text>
<text x="108.8" y="937.5" font-size="6.2" fill="#ffff00" text-anchor="middle" textLength="3.86" lengthAdjust="spacingAndGlyphs" font-weight="bold">0</text>
<text x="141.8" y="937.5" font-size="6.2" fill="#ffff00" text-anchor="middle" textLength="7.72" lengthAdjust="spacingAndGlyphs" font-weight="bold">50</text>
<text x="174.8" y="937.5" font-size="6.2" fill="#ffff00" text-anchor="middle" textLength="11.58" lengthAdjust="spacingAndGlyphs" font-weight="bold">100</text>
<text x="208.8" y="937.5" font-size="6.2" fill="#ffff00" text-anchor="middle" textLength="11.58" lengthAdjust="spacingAndGlyphs" font-weight="bold">150</text>
<text x="241.8" y="937.5" font-size="6.2" fill="#ffff00" text-anchor="middle" textLength="11.58" lengthAdjust="spacingAndGlyphs" font-weight="bold">200</text>
<text x="275.8" y="937.5" font-size="6.2" fill="#ffff00" text-anchor="middle" textLength="11.58" lengthAdjust="spacingAndGlyphs" font-weight="bold">250</text>
<text x="308.8" y="937.5" font-size="6.2" fill="#ffff00" text-anchor="middle" textLength="11.58" lengthAdjust="spacingAndGlyphs" font-weight="bold">300</text>
<text x="89" y="714" font-size="6.2" fill="#ffff00" textLength="26.45" lengthAdjust="spacingAndGlyphs" font-weight="bold">Rm [MPa]</text>
<text x="321" y="937.5" font-size="6.2" fill="#ffff00" textLength="18.19" lengthAdjust="spacingAndGlyphs" font-weight="bold">d [mm]</text>
<text x="116.8" y="721.7" font-size="8.4" fill="#00ff00" textLength="129.4" lengthAdjust="spacingAndGlyphs">Rm = Rm10 * (1,2 - 0,2 * log (d [mm]))</text>
<path d="M111.90 727.90 L112.09 729.13 L112.30 730.36 L112.52 731.59 L112.77 732.83 L113.03 734.06 L113.31 735.29 L113.61 736.52 L113.94 737.75 L114.30 738.98 L114.68 740.22 L115.10 741.45 L115.54 742.68 L116.03 743.91 L116.55 745.14 L117.11 746.37 L117.72 747.61 L118.38 748.84 L119.09 750.07 L119.86 751.30 L120.69 752.53 L121.58 753.76 L122.55 755.00 L123.59 756.23 L124.72 757.46 L125.94 758.69 L127.25 759.92 L128.67 761.15 L130.21 762.39 L134.21 765.21 L138.21 767.61 L142.21 769.70 L146.21 771.55 L150.21 773.20 L154.21 774.70 L158.21 776.08 L162.21 777.34 L166.21 778.51 L170.21 779.60 L174.21 780.62 L178.21 781.58 L182.21 782.49 L186.21 783.34 L190.21 784.16 L194.21 784.93 L198.21 785.67 L202.21 786.38 L206.21 787.05 L210.21 787.70 L214.21 788.32 L218.21 788.92 L222.21 789.50 L226.21 790.06 L230.21 790.60 L234.21 791.12 L238.21 791.63 L242.21 792.12 L246.21 792.59 L250.21 793.05 L254.21 793.50 L258.21 793.94 L262.21 794.36 L266.21 794.78 L270.21 795.18 L274.21 795.57 L278.21 795.96 L282.21 796.33 L286.21 796.70 L290.21 797.06 L294.21 797.41 L298.21 797.75 L302.21 798.09 L306.21 798.42 L309.50 798.68" fill="none" stroke="#ff0000" stroke-width="3" stroke-linejoin="round"/>
<path d="M395.5 727V930" stroke="#ffff00" stroke-width="1"/>
<path d="M428.5 727V930" stroke="#ffff00" stroke-width="1"/>
<path d="M461.5 727V930" stroke="#ffff00" stroke-width="1"/>
<path d="M495.5 727V930" stroke="#ffff00" stroke-width="1"/>
<path d="M528.5 727V930" stroke="#ffff00" stroke-width="1"/>
<path d="M562.5 727V930" stroke="#ffff00" stroke-width="1"/>
<path d="M595.5 727V930" stroke="#ffff00" stroke-width="1"/>
<path d="M394 727.5H596" stroke="#ffff00" stroke-width="1"/>
<path d="M394 750.5H596" stroke="#ffff00" stroke-width="1"/>
<path d="M394 772.5H596" stroke="#ffff00" stroke-width="1"/>
<path d="M394 794.5H596" stroke="#ffff00" stroke-width="1"/>
<path d="M394 816.5H596" stroke="#ffff00" stroke-width="1"/>
<path d="M394 839.5H596" stroke="#ffff00" stroke-width="1"/>
<path d="M394 861.5H596" stroke="#ffff00" stroke-width="1"/>
<path d="M394 883.5H596" stroke="#ffff00" stroke-width="1"/>
<path d="M394 905.5H596" stroke="#ffff00" stroke-width="1"/>
<path d="M394 928.5H596" stroke="#ffff00" stroke-width="1"/>
<path d="M395.5 716V728" stroke="#ffff00" stroke-width="1"/>
<rect x="394" y="721" width="3" height="5" fill="#ffff00"/>
<path d="M595 928.5H606" stroke="#ffff00" stroke-width="1"/>
<rect x="597" y="927" width="5" height="3" fill="#ffff00"/>
<text x="375" y="729.5" font-size="6.2" fill="#ffff00" textLength="11.58" lengthAdjust="spacingAndGlyphs" font-weight="bold">900</text>
<text x="375" y="752.5" font-size="6.2" fill="#ffff00" textLength="11.58" lengthAdjust="spacingAndGlyphs" font-weight="bold">800</text>
<text x="375" y="774.5" font-size="6.2" fill="#ffff00" textLength="11.58" lengthAdjust="spacingAndGlyphs" font-weight="bold">700</text>
<text x="375" y="796.5" font-size="6.2" fill="#ffff00" textLength="11.58" lengthAdjust="spacingAndGlyphs" font-weight="bold">600</text>
<text x="375" y="818.5" font-size="6.2" fill="#ffff00" textLength="11.58" lengthAdjust="spacingAndGlyphs" font-weight="bold">500</text>
<text x="375" y="841.5" font-size="6.2" fill="#ffff00" textLength="11.58" lengthAdjust="spacingAndGlyphs" font-weight="bold">400</text>
<text x="375" y="863.5" font-size="6.2" fill="#ffff00" textLength="11.58" lengthAdjust="spacingAndGlyphs" font-weight="bold">300</text>
<text x="375" y="885.5" font-size="6.2" fill="#ffff00" textLength="11.58" lengthAdjust="spacingAndGlyphs" font-weight="bold">200</text>
<text x="375" y="907.5" font-size="6.2" fill="#ffff00" textLength="11.58" lengthAdjust="spacingAndGlyphs" font-weight="bold">100</text>
<text x="375" y="930.5" font-size="6.2" fill="#ffff00" textLength="3.86" lengthAdjust="spacingAndGlyphs" font-weight="bold">0</text>
<text x="394.8" y="937.5" font-size="6.2" fill="#ffff00" text-anchor="middle" textLength="3.86" lengthAdjust="spacingAndGlyphs" font-weight="bold">0</text>
<text x="427.8" y="937.5" font-size="6.2" fill="#ffff00" text-anchor="middle" textLength="7.72" lengthAdjust="spacingAndGlyphs" font-weight="bold">50</text>
<text x="460.8" y="937.5" font-size="6.2" fill="#ffff00" text-anchor="middle" textLength="11.58" lengthAdjust="spacingAndGlyphs" font-weight="bold">100</text>
<text x="494.8" y="937.5" font-size="6.2" fill="#ffff00" text-anchor="middle" textLength="11.58" lengthAdjust="spacingAndGlyphs" font-weight="bold">150</text>
<text x="527.8" y="937.5" font-size="6.2" fill="#ffff00" text-anchor="middle" textLength="11.58" lengthAdjust="spacingAndGlyphs" font-weight="bold">200</text>
<text x="561.8" y="937.5" font-size="6.2" fill="#ffff00" text-anchor="middle" textLength="11.58" lengthAdjust="spacingAndGlyphs" font-weight="bold">250</text>
<text x="594.8" y="937.5" font-size="6.2" fill="#ffff00" text-anchor="middle" textLength="11.58" lengthAdjust="spacingAndGlyphs" font-weight="bold">300</text>
<text x="375" y="714" font-size="6.2" fill="#ffff00" textLength="24.81" lengthAdjust="spacingAndGlyphs" font-weight="bold">Re [MPa]</text>
<text x="607" y="937.5" font-size="6.2" fill="#ffff00" textLength="18.19" lengthAdjust="spacingAndGlyphs" font-weight="bold">d [mm]</text>
<text x="403.2" y="721.7" font-size="8.4" fill="#00ff00" textLength="124.8" lengthAdjust="spacingAndGlyphs">Re = Re10 * (1,2 - 0,2 * log (d [mm]))</text>
<path d="M402.17 727.50 L402.70 728.84 L403.28 730.19 L403.90 731.53 L404.57 732.87 L405.30 734.22 L406.08 735.56 L406.93 736.91 L407.84 738.25 L408.83 739.59 L409.89 740.94 L411.04 742.28 L412.29 743.62 L413.63 744.97 L415.08 746.31 L416.65 747.65 L418.34 749.00 L420.17 750.34 L422.14 751.69 L424.27 753.03 L428.27 755.30 L432.27 757.31 L436.27 759.12 L440.27 760.75 L444.27 762.24 L448.27 763.62 L452.27 764.89 L456.27 766.08 L460.27 767.20 L464.27 768.24 L468.27 769.23 L472.27 770.16 L476.27 771.05 L480.27 771.89 L484.27 772.70 L488.27 773.47 L492.27 774.21 L496.27 774.91 L500.27 775.59 L504.27 776.25 L508.27 776.88 L512.27 777.49 L516.27 778.07 L520.27 778.64 L524.27 779.19 L528.27 779.73 L532.27 780.25 L536.27 780.75 L540.27 781.24 L544.27 781.71 L548.27 782.18 L552.27 782.63 L556.27 783.07 L560.27 783.50 L564.27 783.92 L568.27 784.33 L572.27 784.72 L576.27 785.12 L580.27 785.50 L584.27 785.87 L588.27 786.24 L592.27 786.60 L595.50 786.88" fill="none" stroke="#ff0000" stroke-width="3" stroke-linejoin="round"/>
<text x="716.2" y="151" font-size="10" fill="#00ffff" textLength="37.69" lengthAdjust="spacingAndGlyphs" xml:space="preserve">51 CrV 4</text>
<text x="716.2" y="163" font-size="10" fill="#00ffff" textLength="66.34" lengthAdjust="spacingAndGlyphs" xml:space="preserve">Wst-Nr.: 1.8159</text>
<text x="716.2" y="175" font-size="10" fill="#00ffff" textLength="71.13" lengthAdjust="spacingAndGlyphs" xml:space="preserve">Ident-Nr.: 1.8159</text>
<text x="716.2" y="188" font-size="10" fill="#00ffff" textLength="73.8" lengthAdjust="spacingAndGlyphs" xml:space="preserve">Verguetungsstahl</text>
<text x="716.2" y="200" font-size="10" fill="#00ffff" textLength="61.85" lengthAdjust="spacingAndGlyphs" xml:space="preserve">E= 2,1E5 MPa</text>
<text x="716.2" y="212" font-size="10" fill="#00ffff" textLength="37.63" lengthAdjust="spacingAndGlyphs" xml:space="preserve">μ =  0,30</text>
<text x="716.2" y="224" font-size="10" fill="#00ffff" textLength="79.89" lengthAdjust="spacingAndGlyphs" xml:space="preserve">rho =  7,80 kg/dm3</text>
<text x="716.2" y="236" font-size="10" fill="#00ffff" textLength="65.91" lengthAdjust="spacingAndGlyphs" xml:space="preserve">Rm= 1100 MPa</text>
<text x="716.2" y="248" font-size="10" fill="#00ffff" textLength="61.31" lengthAdjust="spacingAndGlyphs" xml:space="preserve">Re=  900 MPa</text>
<text x="716.2" y="260" font-size="10" fill="#00ffff" textLength="49.64" lengthAdjust="spacingAndGlyphs" xml:space="preserve">A5 =  9,0 %</text>
<text x="716.2" y="273" font-size="10" fill="#00ffff" textLength="46.45" lengthAdjust="spacingAndGlyphs" xml:space="preserve">Z = 40,0 %</text>
<text x="716.2" y="285" font-size="10" fill="#00ffff" textLength="70.06" lengthAdjust="spacingAndGlyphs" xml:space="preserve">DIN EN 10083-1</text>
<text x="716.2" y="297" font-size="10" fill="#00ffff" textLength="72.98" lengthAdjust="spacingAndGlyphs" xml:space="preserve">sig.W=  451 MPa</text>
<text x="716.2" y="309" font-size="10" fill="#00ffff" textLength="80.42" lengthAdjust="spacingAndGlyphs" xml:space="preserve">sig.Sch=  767 MPa</text>
<text x="716.2" y="321" font-size="10" fill="#ff00ff" textLength="77.77" lengthAdjust="spacingAndGlyphs" xml:space="preserve">sig.bF= 1260 MPa</text>
<text x="716.2" y="333" font-size="10" fill="#ff00ff" textLength="78.29" lengthAdjust="spacingAndGlyphs" xml:space="preserve">sig.bW=  484 MPa</text>
<text x="716.2" y="345" font-size="10" fill="#ff00ff" textLength="85.73" lengthAdjust="spacingAndGlyphs" xml:space="preserve">sig.bSch=  823 MPa</text>
<text x="716.2" y="358" font-size="10" fill="#00ff00" textLength="73.52" lengthAdjust="spacingAndGlyphs" xml:space="preserve">tau tF=  630 MPa</text>
<text x="716.2" y="370" font-size="10" fill="#00ff00" textLength="74.05" lengthAdjust="spacingAndGlyphs" xml:space="preserve">tau W=  330 MPa</text>
<text x="716.2" y="382" font-size="10" fill="#00ff00" textLength="79.89" lengthAdjust="spacingAndGlyphs" xml:space="preserve">tau sch=  528 MPa</text>
<text x="972" y="151" font-size="10" fill="#00ffff" textLength="66.88" lengthAdjust="spacingAndGlyphs" xml:space="preserve">EU : 51;50CrV4</text>
<text x="972" y="163" font-size="10" fill="#00ffff" textLength="70.58" lengthAdjust="spacingAndGlyphs" xml:space="preserve">AFNOR: 50 CV4</text>
<text x="972" y="175" font-size="10" fill="#00ffff" textLength="51.84" lengthAdjust="spacingAndGlyphs" xml:space="preserve">JIS: SUP 10</text>
<text x="972" y="188" font-size="10" fill="#00ffff" textLength="73.24" lengthAdjust="spacingAndGlyphs" xml:space="preserve">GOST: 50ChGFA</text>
<text x="972" y="200" font-size="10" fill="#00ffff" textLength="70.08" lengthAdjust="spacingAndGlyphs" xml:space="preserve">USA: 6145;6150</text>
<text x="972" y="212" font-size="10" fill="#00ffff" textLength="84.68" lengthAdjust="spacingAndGlyphs" xml:space="preserve">C = 0,470 .. 0,550%</text>
<text x="972" y="224" font-size="10" fill="#00ffff" textLength="86.27" lengthAdjust="spacingAndGlyphs" xml:space="preserve">Si = 0,000 .. 0,400%</text>
<text x="972" y="236" font-size="10" fill="#00ffff" textLength="91.05" lengthAdjust="spacingAndGlyphs" xml:space="preserve">Mn = 0,700 .. 1,100%</text>
<text x="972" y="248" font-size="10" fill="#00ffff" textLength="83.98" lengthAdjust="spacingAndGlyphs" xml:space="preserve">P = 0,000 .. 0,035%</text>
<text x="972" y="260" font-size="10" fill="#00ffff" textLength="84.15" lengthAdjust="spacingAndGlyphs" xml:space="preserve">S = 0,000 .. 0,035%</text>
<text x="972" y="273" font-size="10" fill="#00ffff" textLength="87.86" lengthAdjust="spacingAndGlyphs" xml:space="preserve">Cr = 0,900 .. 1,200%</text>
<text x="972" y="285" font-size="10" fill="#00ffff" textLength="84.15" lengthAdjust="spacingAndGlyphs" xml:space="preserve">V = 0,100 .. 0,250%</text>
<path d="M715.5 492V715" stroke="#ffff00" stroke-width="1"/>
<path d="M740.5 492V715" stroke="#ffff00" stroke-width="1"/>
<path d="M765.5 492V715" stroke="#ffff00" stroke-width="1"/>
<path d="M790.5 492V715" stroke="#ffff00" stroke-width="1"/>
<path d="M815.5 492V715" stroke="#ffff00" stroke-width="1"/>
<path d="M840.5 492V715" stroke="#ffff00" stroke-width="1"/>
<path d="M865.5 492V715" stroke="#ffff00" stroke-width="1"/>
<path d="M890.5 492V715" stroke="#ffff00" stroke-width="1"/>
<path d="M915.5 492V715" stroke="#ffff00" stroke-width="1"/>
<path d="M714 503.5H916" stroke="#ffff00" stroke-width="1"/>
<text x="695" y="505.5" font-size="6.2" fill="#ffff00" textLength="5.93" lengthAdjust="spacingAndGlyphs" font-weight="bold">50</text>
<path d="M714 531.5H916" stroke="#ffff00" stroke-width="1"/>
<text x="695" y="533.5" font-size="6.2" fill="#ffff00" textLength="5.93" lengthAdjust="spacingAndGlyphs" font-weight="bold">10</text>
<path d="M714 543.5H916" stroke="#ffff00" stroke-width="1"/>
<text x="695" y="545.5" font-size="6.2" fill="#ffff00" textLength="2.97" lengthAdjust="spacingAndGlyphs" font-weight="bold">5</text>
<path d="M714 572.5H916" stroke="#ffff00" stroke-width="1"/>
<text x="695" y="574.5" font-size="6.2" fill="#ffff00" textLength="2.97" lengthAdjust="spacingAndGlyphs" font-weight="bold">1</text>
<path d="M714 584.5H916" stroke="#ffff00" stroke-width="1"/>
<text x="695" y="586.5" font-size="6.2" fill="#ffff00" textLength="7.41" lengthAdjust="spacingAndGlyphs" font-weight="bold">0,5</text>
<path d="M714 612.5H916" stroke="#ffff00" stroke-width="1"/>
<text x="695" y="614.5" font-size="6.2" fill="#ffff00" textLength="7.41" lengthAdjust="spacingAndGlyphs" font-weight="bold">0,1</text>
<path d="M714 624.5H916" stroke="#ffff00" stroke-width="1"/>
<text x="695" y="626.5" font-size="6.2" fill="#ffff00" textLength="10.38" lengthAdjust="spacingAndGlyphs" font-weight="bold">0,05</text>
<path d="M714 652.5H916" stroke="#ffff00" stroke-width="1"/>
<text x="695" y="654.5" font-size="6.2" fill="#ffff00" textLength="10.38" lengthAdjust="spacingAndGlyphs" font-weight="bold">0,01</text>
<path d="M714 664.5H916" stroke="#ffff00" stroke-width="1"/>
<text x="695" y="666.5" font-size="6.2" fill="#ffff00" textLength="13.34" lengthAdjust="spacingAndGlyphs" font-weight="bold">0,005</text>
<path d="M714 692.5H916" stroke="#ffff00" stroke-width="1"/>
<text x="695" y="694.5" font-size="6.2" fill="#ffff00" textLength="13.34" lengthAdjust="spacingAndGlyphs" font-weight="bold">0,001</text>
<text x="695" y="476" font-size="6.2" fill="#ffff00" textLength="5.29" lengthAdjust="spacingAndGlyphs" font-weight="bold">%</text>
<path d="M715.5 481V493" stroke="#ffff00" stroke-width="1"/>
<rect x="714" y="486" width="3" height="5" fill="#ffff00"/>
<text x="717.5" y="484.3" font-size="8.4" fill="#00ff00" textLength="96.8" lengthAdjust="spacingAndGlyphs">Composants d'alliage 1.8159</text>
<rect x="715.5" y="582.9114561512808" width="13" height="2.7374197454969362" fill="url(#h00ffff)" stroke="#00ffff" stroke-width="1"/>
<rect x="728.5" y="588.4573943477487" width="12" height="104.34260565225122" fill="url(#hff00ff)" stroke="#ff00ff" stroke-width="1"/>
<rect x="740.5" y="570.8401533251551" width="13" height="7.871415270273133" fill="url(#hff0000)" stroke="#ff0000" stroke-width="1"/>
<rect x="753.5" y="630.882871421554" width="12" height="61.917128578445954" fill="url(#h00ff00)" stroke="#00ff00" stroke-width="1"/>
<rect x="765.5" y="630.882871421554" width="13" height="61.917128578445954" fill="url(#h00ffff)" stroke="#00ffff" stroke-width="1"/>
<rect x="778.5" y="569.3248320334902" width="12" height="5.010043337992897" fill="url(#hff00ff)" stroke="#ff00ff" stroke-width="1"/>
<rect x="790.5" y="596.6426056522513" width="13" height="15.957394347748732" fill="url(#hff0000)" stroke="#ff0000" stroke-width="1"/>
<text x="718" y="705.5" font-size="5" fill="#00ffff" textLength="3.47" lengthAdjust="spacingAndGlyphs" font-weight="bold">C</text>
<text x="731" y="705.5" font-size="5" fill="#ff00ff" textLength="4.27" lengthAdjust="spacingAndGlyphs" font-weight="bold">Si</text>
<text x="742" y="705.5" font-size="5" fill="#ff0000" textLength="6.67" lengthAdjust="spacingAndGlyphs" font-weight="bold">Mn</text>
<text x="756" y="705.5" font-size="5" fill="#00ff00" textLength="3.2" lengthAdjust="spacingAndGlyphs" font-weight="bold">P</text>
<text x="768" y="705.5" font-size="5" fill="#00ffff" textLength="3.2" lengthAdjust="spacingAndGlyphs" font-weight="bold">S</text>
<text x="780" y="705.5" font-size="5" fill="#ff00ff" textLength="5.06" lengthAdjust="spacingAndGlyphs" font-weight="bold">Cr</text>
<text x="793" y="705.5" font-size="5" fill="#ff0000" textLength="3.2" lengthAdjust="spacingAndGlyphs" font-weight="bold">V</text>
<rect x="928.5" y="491.5" width="13" height="211" fill="none" stroke="#ff0000" stroke-width="3"/>
<rect x="927" y="490" width="16" height="8" fill="#ff0000"/>
<path d="M929 492.5H941" stroke="#00ffff" stroke-width="1"/>
<path d="M929 493.5H941" stroke="#ff00ff" stroke-width="1"/>
<path d="M929 495.5H941" stroke="#00ffff" stroke-width="1"/>
<path d="M1001.5 506V686" stroke="#ffff00" stroke-width="1"/>
<path d="M1013.5 506V686" stroke="#ffff00" stroke-width="1"/>
<path d="M1019.5 506V686" stroke="#ffff00" stroke-width="1"/>
<path d="M1024.5 506V686" stroke="#ffff00" stroke-width="1"/>
<path d="M1028.5 506V686" stroke="#ffff00" stroke-width="1"/>
<path d="M1031.5 506V686" stroke="#ffff00" stroke-width="1"/>
<path d="M1033.5 506V686" stroke="#ffff00" stroke-width="1"/>
<path d="M1036.5 506V686" stroke="#ffff00" stroke-width="1"/>
<path d="M1038.5 506V686" stroke="#ffff00" stroke-width="1"/>
<path d="M1039.5 506V686" stroke="#ffff00" stroke-width="1"/>
<path d="M1051.5 506V686" stroke="#ffff00" stroke-width="1"/>
<path d="M1057.5 506V686" stroke="#ffff00" stroke-width="1"/>
<path d="M1062.5 506V686" stroke="#ffff00" stroke-width="1"/>
<path d="M1066.5 506V686" stroke="#ffff00" stroke-width="1"/>
<path d="M1069.5 506V686" stroke="#ffff00" stroke-width="1"/>
<path d="M1071.5 506V686" stroke="#ffff00" stroke-width="1"/>
<path d="M1074.5 506V686" stroke="#ffff00" stroke-width="1"/>
<path d="M1076.5 506V686" stroke="#ffff00" stroke-width="1"/>
<path d="M1077.5 506V686" stroke="#ffff00" stroke-width="1"/>
<path d="M1089.5 506V686" stroke="#ffff00" stroke-width="1"/>
<path d="M1095.5 506V686" stroke="#ffff00" stroke-width="1"/>
<path d="M1100.5 506V686" stroke="#ffff00" stroke-width="1"/>
<path d="M1104.5 506V686" stroke="#ffff00" stroke-width="1"/>
<path d="M1107.5 506V686" stroke="#ffff00" stroke-width="1"/>
<path d="M1109.5 506V686" stroke="#ffff00" stroke-width="1"/>
<path d="M1112.5 506V686" stroke="#ffff00" stroke-width="1"/>
<path d="M1114.5 506V686" stroke="#ffff00" stroke-width="1"/>
<path d="M1115.5 506V686" stroke="#ffff00" stroke-width="1"/>
<path d="M1127.5 506V686" stroke="#ffff00" stroke-width="1"/>
<path d="M1133.5 506V686" stroke="#ffff00" stroke-width="1"/>
<path d="M1138.5 506V686" stroke="#ffff00" stroke-width="1"/>
<path d="M1142.5 506V686" stroke="#ffff00" stroke-width="1"/>
<path d="M1145.5 506V686" stroke="#ffff00" stroke-width="1"/>
<path d="M1147.5 506V686" stroke="#ffff00" stroke-width="1"/>
<path d="M1150.5 506V686" stroke="#ffff00" stroke-width="1"/>
<path d="M1152.5 506V686" stroke="#ffff00" stroke-width="1"/>
<path d="M1153.5 506V686" stroke="#ffff00" stroke-width="1"/>
<path d="M1165.5 506V686" stroke="#ffff00" stroke-width="1"/>
<path d="M1171.5 506V686" stroke="#ffff00" stroke-width="1"/>
<path d="M1176.5 506V686" stroke="#ffff00" stroke-width="1"/>
<path d="M1180.5 506V686" stroke="#ffff00" stroke-width="1"/>
<path d="M1183.5 506V686" stroke="#ffff00" stroke-width="1"/>
<path d="M1185.5 506V686" stroke="#ffff00" stroke-width="1"/>
<path d="M1188.5 506V686" stroke="#ffff00" stroke-width="1"/>
<path d="M1190.5 506V686" stroke="#ffff00" stroke-width="1"/>
<path d="M1191.5 506V686" stroke="#ffff00" stroke-width="1"/>
<path d="M1000 506.5H1192" stroke="#ffff00" stroke-width="1"/>
<path d="M1000 514.5H1192" stroke="#ffff00" stroke-width="1"/>
<path d="M1000 523.5H1192" stroke="#ffff00" stroke-width="1"/>
<path d="M1000 534.5H1192" stroke="#ffff00" stroke-width="1"/>
<path d="M1000 546.5H1192" stroke="#ffff00" stroke-width="1"/>
<path d="M1000 560.5H1192" stroke="#ffff00" stroke-width="1"/>
<path d="M1000 577.5H1192" stroke="#ffff00" stroke-width="1"/>
<path d="M1000 600.5H1192" stroke="#ffff00" stroke-width="1"/>
<path d="M1000 631.5H1192" stroke="#ffff00" stroke-width="1"/>
<path d="M1000 685.5H1192" stroke="#ffff00" stroke-width="1"/>
<text x="982" y="508.5" font-size="5.5" fill="#ffff00" textLength="9.39" lengthAdjust="spacingAndGlyphs" font-weight="bold">1E3</text>
<text x="982" y="516.6905908103608" font-size="5.5" fill="#ffff00" textLength="7.89" lengthAdjust="spacingAndGlyphs" font-weight="bold">900</text>
<text x="982" y="525.8468923284421" font-size="5.5" fill="#ffff00" textLength="7.89" lengthAdjust="spacingAndGlyphs" font-weight="bold">800</text>
<text x="982" y="536.227450837448" font-size="5.5" fill="#ffff00" textLength="7.89" lengthAdjust="spacingAndGlyphs" font-weight="bold">700</text>
<text x="982" y="548.2109261813279" font-size="5.5" fill="#ffff00" textLength="7.89" lengthAdjust="spacingAndGlyphs" font-weight="bold">600</text>
<text x="982" y="562.3843692238527" font-size="5.5" fill="#ffff00" textLength="7.89" lengthAdjust="spacingAndGlyphs" font-weight="bold">500</text>
<text x="982" y="579.7312615522947" font-size="5.5" fill="#ffff00" textLength="7.89" lengthAdjust="spacingAndGlyphs" font-weight="bold">400</text>
<text x="982" y="602.0952954051804" font-size="5.5" fill="#ffff00" textLength="7.89" lengthAdjust="spacingAndGlyphs" font-weight="bold">300</text>
<text x="982" y="633.6156307761473" font-size="5.5" fill="#ffff00" textLength="7.89" lengthAdjust="spacingAndGlyphs" font-weight="bold">200</text>
<text x="982" y="687.5" font-size="5.5" fill="#ffff00" textLength="9.39" lengthAdjust="spacingAndGlyphs" font-weight="bold">1E2</text>
<text x="982" y="494" font-size="5.5" fill="#ffff00" textLength="14.08" lengthAdjust="spacingAndGlyphs" font-weight="bold">sigma</text>
<text x="1001.2" y="500.5" font-size="8.4" fill="#00ff00" textLength="106.7" lengthAdjust="spacingAndGlyphs">Woehler Traction, alterné (R = -1)</text>
<text x="1000.5" y="695.5" font-size="5.5" fill="#ffff00" text-anchor="middle" textLength="9.39" lengthAdjust="spacingAndGlyphs" font-weight="bold">1E3</text>
<text x="1025.9" y="695.5" font-size="5.5" fill="#ffff00" text-anchor="middle" textLength="10.52" lengthAdjust="spacingAndGlyphs" font-weight="bold">5000</text>
<text x="1037.8" y="695.5" font-size="5.5" fill="#ffff00" text-anchor="middle" textLength="9.39" lengthAdjust="spacingAndGlyphs" font-weight="bold">1E4</text>
<text x="1064.2" y="695.5" font-size="5.5" fill="#ffff00" text-anchor="middle" textLength="12.33" lengthAdjust="spacingAndGlyphs" font-weight="bold">50E3</text>
<text x="1077" y="695.5" font-size="5.5" fill="#ffff00" text-anchor="middle" textLength="15.27" lengthAdjust="spacingAndGlyphs" font-weight="bold">100E3</text>
<text x="1102" y="695.5" font-size="5.5" fill="#ffff00" text-anchor="middle" textLength="15.27" lengthAdjust="spacingAndGlyphs" font-weight="bold">500E3</text>
<text x="1113" y="695.5" font-size="5.5" fill="#ffff00" text-anchor="middle" textLength="9.39" lengthAdjust="spacingAndGlyphs" font-weight="bold">1E6</text>
<text x="1140.5" y="695.5" font-size="5.5" fill="#ffff00" text-anchor="middle" textLength="9.39" lengthAdjust="spacingAndGlyphs" font-weight="bold">5E6</text>
<text x="1152" y="695.5" font-size="5.5" fill="#ffff00" text-anchor="middle" textLength="12.33" lengthAdjust="spacingAndGlyphs" font-weight="bold">10E6</text>
<text x="1178" y="695.5" font-size="5.5" fill="#ffff00" text-anchor="middle" textLength="12.33" lengthAdjust="spacingAndGlyphs" font-weight="bold">50E6</text>
<text x="1206" y="695.5" font-size="5.5" fill="#ffff00" text-anchor="middle" textLength="3.81" lengthAdjust="spacingAndGlyphs" font-weight="bold">N</text>
<path d="M1001.5 685V687" stroke="#ffff00" stroke-width="1"/>
<path d="M1028.5 685V687" stroke="#ffff00" stroke-width="1"/>
<path d="M1039.5 685V687" stroke="#ffff00" stroke-width="1"/>
<path d="M1066.5 685V687" stroke="#ffff00" stroke-width="1"/>
<path d="M1077.5 685V687" stroke="#ffff00" stroke-width="1"/>
<path d="M1104.5 685V687" stroke="#ffff00" stroke-width="1"/>
<path d="M1115.5 685V687" stroke="#ffff00" stroke-width="1"/>
<path d="M1142.5 685V687" stroke="#ffff00" stroke-width="1"/>
<path d="M1153.5 685V687" stroke="#ffff00" stroke-width="1"/>
<path d="M1180.5 685V687" stroke="#ffff00" stroke-width="1"/>
<path d="M1001.50 514.43 L1126.94 568.40 L1192.00 568.40" fill="none" stroke="#ff0000" stroke-width="3" stroke-linejoin="round"/>
<path d="M701.5 964V855.5H1243" fill="none" stroke="#ff0000" stroke-width="3"/>
<path d="M701 883.5H1243" stroke="#ffff00" stroke-width="1"/>
<path d="M794.5 856V884" stroke="#ffff00" stroke-width="1"/>
<path d="M924.5 856V964" stroke="#ffff00" stroke-width="1"/>
<path d="M1050.5 856V884" stroke="#ffff00" stroke-width="1"/>
<path d="M1177.5 856V884" stroke="#ffff00" stroke-width="1"/>
<path d="M924 910.5H1243" stroke="#ffff00" stroke-width="1"/>
<path d="M1086.5 883V964" stroke="#ffff00" stroke-width="1"/>
<path d="M1086 937.5H1243" stroke="#ffff00" stroke-width="1"/>
<path d="M1110.5 937V964" stroke="#ffff00" stroke-width="1"/>
<path d="M1183.5 937V964" stroke="#ffff00" stroke-width="1"/>
<path d="M1213.5 937V964" stroke="#ffff00" stroke-width="1"/>
<text x="704" y="863" font-size="6.8" fill="#ffff00" textLength="59" lengthAdjust="spacingAndGlyphs" font-weight="bold">Responsible dept.</text>
<text x="797" y="863" font-size="6.8" fill="#ffff00" textLength="65" lengthAdjust="spacingAndGlyphs" font-weight="bold">Technical reference</text>
<text x="927" y="863" font-size="6.8" fill="#ffff00" textLength="34" lengthAdjust="spacingAndGlyphs" font-weight="bold">Created by</text>
<text x="1053" y="863" font-size="6.8" fill="#ffff00" textLength="39" lengthAdjust="spacingAndGlyphs" font-weight="bold">Approved by</text>
<text x="927" y="890" font-size="6.8" fill="#ffff00" textLength="48" lengthAdjust="spacingAndGlyphs" font-weight="bold">Document type</text>
<text x="1089" y="890" font-size="6.8" fill="#ffff00" textLength="54.7" lengthAdjust="spacingAndGlyphs" font-weight="bold">Document status</text>
<text x="927" y="917" font-size="6.8" fill="#ffff00" textLength="81" lengthAdjust="spacingAndGlyphs" font-weight="bold">Title, Supplementary title</text>
<text x="1089" y="944" font-size="6.8" fill="#ffff00" textLength="14" lengthAdjust="spacingAndGlyphs" font-weight="bold">Rev.</text>
<text x="1113" y="944" font-size="6.8" fill="#ffff00" textLength="42.5" lengthAdjust="spacingAndGlyphs" font-weight="bold">Date of issue</text>
<text x="1186" y="944" font-size="6.8" fill="#ffff00" textLength="18" lengthAdjust="spacingAndGlyphs" font-weight="bold">Lang.</text>
<text x="1216" y="944" font-size="6.8" fill="#ffff00" textLength="15.6" lengthAdjust="spacingAndGlyphs" font-weight="bold">page</text>
<text x="930" y="940" font-size="14.5" fill="#ff0000">51 CrV 4</text>
<text x="1093" y="929" font-size="14.5" fill="#ff0000" textLength="43" lengthAdjust="spacingAndGlyphs">1.8159</text>
<text x="930" y="957" font-size="9.5" fill="#00ff00" textLength="27.4" lengthAdjust="spacingAndGlyphs">1.8159</text>
<text x="1092" y="958" font-size="9.5" fill="#00ff00">A</text>
<text x="1116" y="958" font-size="9.5" fill="#00ff00" textLength="46" lengthAdjust="spacingAndGlyphs">2018-01-15</text>
<text x="1189" y="958" font-size="9.5" fill="#00ff00">fr</text>
</svg></body></html>
